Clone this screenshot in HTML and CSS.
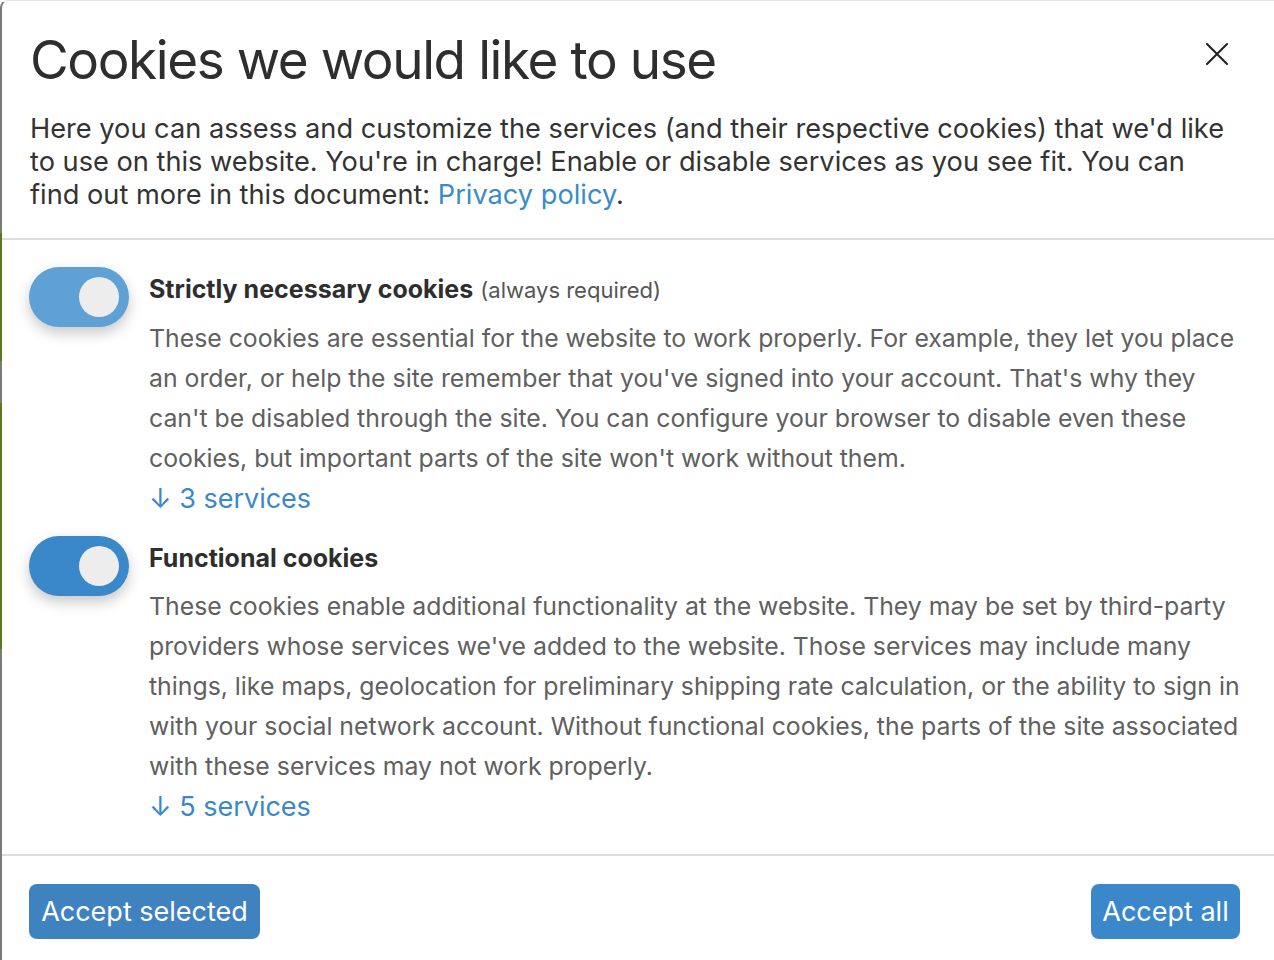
FILE: index.html
```html
<!DOCTYPE html>
<html lang="en">
<head>
<meta charset="utf-8">
<title>Cookies we would like to use</title>
<link rel="stylesheet" href="styles.css">
</head>
<body>
<div class="modal">
  <span class="edge"></span>
  <div class="top">
    <div class="header">
      <h1 class="title">Cookies we would like to use</h1>
      <button class="close" aria-label="Close">
        <svg width="24" height="24" viewBox="0 0 24 24"><path d="M2 2L22 22M22 2L2 22" stroke="#222" stroke-width="2.1" stroke-linecap="round" fill="none"/></svg>
      </button>
    </div>
    <p class="intro">Here you can assess and customize the services (and their respective cookies) that we'd like to use on this website. You're in charge! Enable or disable services as you see fit. You can find out more in this document: <a class="link" href="#">Privacy policy</a>.</p>
  </div>
  <div class="body">
    <div class="purpose">
      <span class="switch switch-fixed"><span class="knob"></span></span>
      <div class="purpose-text">
        <div class="purpose-title"><strong>Strictly necessary cookies</strong> <span class="req">(always required)</span></div>
        <p class="purpose-desc">These cookies are essential for the website to work properly. For example, they let you place an order, or help the site remember that you've signed into your account. That's why they can't be disabled through the site. You can configure your browser to disable even these cookies, but important parts of the site won't work without them.</p>
        <a class="services" href="#"><span class="arrow">↓</span> 3 services</a>
      </div>
    </div>
    <div class="purpose">
      <span class="switch"><span class="knob"></span></span>
      <div class="purpose-text">
        <div class="purpose-title"><strong>Functional cookies</strong></div>
        <p class="purpose-desc">These cookies enable additional functionality at the website. They may be set by third-party providers whose services we've added to the website. Those services may include many things, like maps, geolocation for preliminary shipping rate calculation, or the ability to sign in with your social network account. Without functional cookies, the parts of the site associated with these services may not work properly.</p>
        <a class="services" href="#"><span class="arrow">↓</span> 5 services</a>
      </div>
    </div>
  </div>
  <div class="footer">
    <button class="btn btn-selected">Accept selected</button>
    <button class="btn btn-all">Accept all</button>
  </div>
</div>
</body>
</html>
```

FILE: styles.css
```css
* { box-sizing: border-box; }
html, body { margin: 0; padding: 0; background: #fff; }
body {
  font-family: Inter, "Noto Sans", sans-serif;
  color: #333;
  width: 1274px;
  height: 960px;
  overflow: hidden;
}
.modal {
  position: relative;
  height: 960px;
  border-left: 2px solid #7a7a7a;
  border-top: 1px solid #e6e6e6;
  border-top-left-radius: 8px;
  background: #fff;
}
.edge {
  position: absolute;
  left: -2px;
  top: 232px;
  width: 2px;
  height: 416px;
  background: linear-gradient(to bottom, #5b7a1c 0, #5b7a1c 128px, #7a7a7a 128px, #7a7a7a 170px, #5b7a1c 170px, #5b7a1c 100%);
}
.top {
  padding: 26px 20px 0 28px;
  border-bottom: 2px solid #dcdcdc;
  height: 239px;
}
.header {
  display: flex;
  justify-content: space-between;
  align-items: flex-start;
}
.title {
  margin: 0;
  font-family: Inter, "Liberation Sans", sans-serif;
  font-weight: 400;
  font-size: 53px;
  line-height: 66px;
  letter-spacing: -1.4px;
  color: #2e2e2e;
}
.close {
  border: 0;
  background: none;
  padding: 0;
  margin: 15px 25px 0 0;
  width: 24px;
  height: 24px;
  cursor: pointer;
}
.close svg { display: block; }
.intro {
  margin: 19px 0 0 0;
  max-width: 1200px;
  font-size: 27.2px;
  line-height: 33px;
  color: #333;
}
.link { color: #3a8bcb; text-decoration: none; }
.body {
  padding: 27px 20px 0 27px;
  height: 616px;
  border-bottom: 2px solid #dcdcdc;
}
.purpose {
  display: flex;
  gap: 20px;
  margin-bottom: 17px;
}
.switch {
  flex: none;
  width: 100px;
  height: 60px;
  border-radius: 30px;
  background: #3a88c9;
  display: flex;
  align-items: center;
  justify-content: flex-end;
  padding-right: 10px;
  box-shadow: 0 6px 14px rgba(0,0,0,0.22);
}
.switch-fixed { background: #5fa0d5; }
.knob {
  width: 40px;
  height: 40px;
  border-radius: 50%;
  background: #ededed;
}
.purpose-text { flex: 1; }
.purpose-title {
  font-size: 25px;
  line-height: 44px;
  color: #2e2e2e;
  margin-bottom: 6px;
}
.purpose-title strong { font-weight: 700; }
.req { font-size: 22px; color: #555; }
.purpose-desc {
  margin: 0;
  font-size: 24.8px;
  line-height: 40px;
  color: #606060;
}
.services {
  display: inline-block;
  font-size: 27px;
  line-height: 40px;
  margin-top: 1px;
  color: #3a88c9;
  text-decoration: none;
}
.footer {
  display: flex;
  justify-content: space-between;
  padding: 28px 34px 0 27px;
}
.btn {
  border: 0;
  border-radius: 8px;
  height: 55px;
  padding: 0;
  font-family: Inter, "Liberation Sans", sans-serif;
  font-size: 27px;
  color: #fff;
  white-space: nowrap;
  cursor: pointer;
}
.btn-selected { background: #3f82c0; width: 231px; }
.btn-all { background: #3a88c9; width: 149px; }
```
